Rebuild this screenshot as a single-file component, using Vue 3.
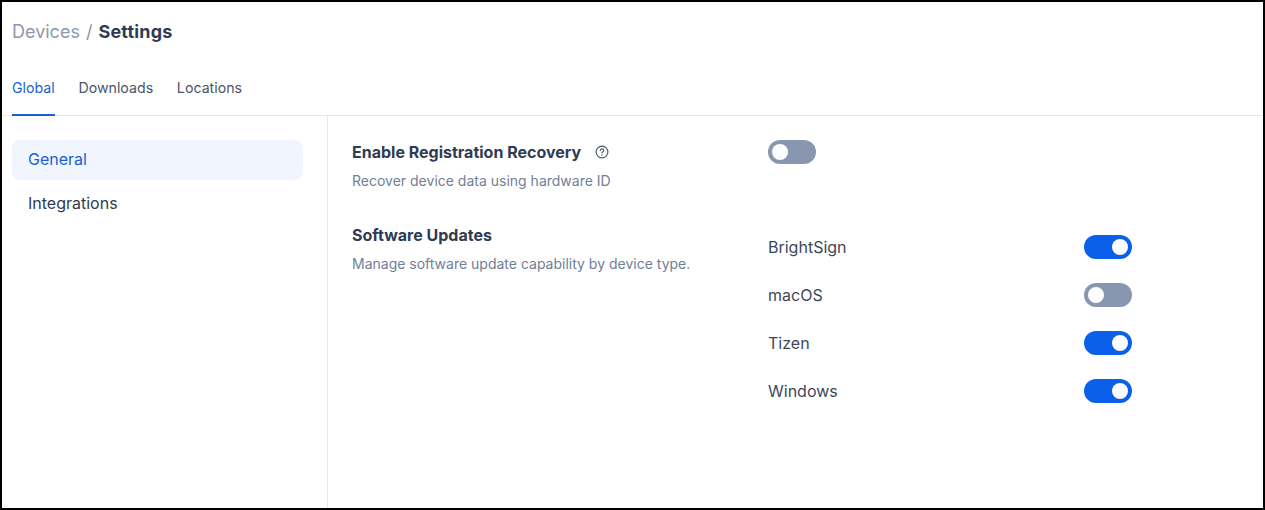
<template>
  <div class="page">
    <header class="header">
      <div class="breadcrumb">
        <span class="crumb">Devices</span>
        <span class="slash">/</span>
        <span class="current">Settings</span>
      </div>
      <nav class="tabs">
        <a
          v-for="tab in tabs"
          :key="tab"
          class="tab"
          :class="{ active: tab === 'Global' }">{{ tab }}</a>
      </nav>
    </header>

    <div class="body">
      <aside class="sidebar">
        <a
          v-for="item in sections"
          :key="item"
          class="side-item"
          :class="{ active: item === 'General' }">{{ item }}</a>
      </aside>

      <main class="content">
        <section class="setting recovery">
          <div class="setting-info">
            <div class="title-row">
              <h3 class="setting-title">Enable Registration Recovery</h3>
              <svg class="help" width="16" height="16" viewBox="0 0 16 16" fill="none">
                <circle cx="8" cy="8" r="5.9" stroke="#4a5568" stroke-width="1.1" />
                <path
                  d="M6.3 6.5c0-1 .8-1.6 1.7-1.6s1.7.6 1.7 1.5c0 1.3-1.7 1.3-1.7 2.6"
                  stroke="#4a5568"
                  stroke-width="1.1"
                  stroke-linecap="round" />
                <circle cx="8" cy="10.9" r=".65" fill="#4a5568" />
              </svg>
            </div>
            <p class="setting-desc">Recover device data using hardware ID</p>
          </div>
          <span class="toggle"><span class="knob"></span></span>
        </section>

        <section class="setting updates">
          <div class="setting-info">
            <h3 class="setting-title">Software Updates</h3>
            <p class="setting-desc">Manage software update capability by device type.</p>
          </div>
          <div class="device-list">
            <div v-for="device in devices" :key="device.name" class="device-row">
              <span class="device-name">{{ device.name }}</span>
              <span class="toggle" :class="{ on: device.on }"><span class="knob"></span></span>
            </div>
          </div>
        </section>
      </main>
    </div>
  </div>
</template>

<script setup>
const tabs = ['Global', 'Downloads', 'Locations'];
const sections = ['General', 'Integrations'];

const devices = [
  { name: 'BrightSign', on: true },
  { name: 'macOS', on: false },
  { name: 'Tizen', on: true },
  { name: 'Windows', on: true },
];
</script>

<style>
html,
body {
  margin: 0;
  background: #fff;
}
</style>

<style scoped>
.page {
  box-sizing: border-box;
  width: 1265px;
  height: 510px;
  border: 2px solid #000;
  display: flex;
  flex-direction: column;
  background: #fff;
  font-family: Inter, "Liberation Sans", sans-serif;
  overflow: hidden;
}

.header {
  padding: 0 10px;
  border-bottom: 1px solid #e2e8f0;
  flex-shrink: 0;
  height: 114px;
  box-sizing: border-box;
  display: flex;
  flex-direction: column;
}

.breadcrumb {
  display: flex;
  align-items: center;
  gap: 6px;
  height: 60px;
  font-size: 18px;
  line-height: 28px;
}

.crumb,
.slash {
  color: #8c98ac;
}

.current {
  font-weight: 700;
  letter-spacing: 0.2px;
  color: #2f3b52;
}

.tabs {
  display: flex;
  gap: 23.7px;
  margin-top: auto;
  margin-bottom: -1px;
  height: 53px;
}

.tab {
  box-sizing: border-box;
  height: 53px;
  padding-top: 15px;
  font-size: 14.2px;
  line-height: 20px;
  color: #4a5568;
}

.tab.active {
  color: #1a5fd0;
  border-bottom: 2px solid #1a5fd0;
}

.body {
  flex: 1;
  display: flex;
  min-height: 0;
}

.sidebar {
  box-sizing: border-box;
  width: 326px;
  flex-shrink: 0;
  padding: 24px 24px 0 10px;
  border-right: 1px solid #e2e8f0;
  display: flex;
  flex-direction: column;
  gap: 4px;
}

.side-item {
  box-sizing: border-box;
  height: 40px;
  padding: 0 16px 2px;
  display: flex;
  align-items: center;
  border-radius: 8px;
  font-size: 16px;
  color: #2f3b52;
}

.side-item.active {
  background: #f1f6fe;
  color: #1a5fd0;
}

.content {
  flex: 1;
  padding: 24px;
}

.setting {
  display: grid;
  grid-template-columns: 416px 364px;
}

.recovery {
  height: 83px;
}

.title-row {
  display: flex;
  align-items: center;
  gap: 13px;
}

.setting-title {
  margin: 0;
  font-size: 16px;
  line-height: 24px;
  font-weight: 700;
  color: #2f3b52;
}

.setting-desc {
  margin: 5px 0 0;
  font-size: 14px;
  line-height: 24px;
  color: #718096;
}

.toggle {
  box-sizing: border-box;
  display: flex;
  align-items: center;
  width: 48px;
  height: 24px;
  padding: 0 4px;
  border-radius: 12px;
  background: #8896b0;
}

.toggle.on {
  background: #0b5fe8;
  justify-content: flex-end;
}

.knob {
  width: 16px;
  height: 16px;
  border-radius: 50%;
  background: #fff;
}

.device-list {
  display: flex;
  flex-direction: column;
  gap: 24px;
  padding-top: 12px;
}

.device-row {
  display: flex;
  align-items: center;
  justify-content: space-between;
  height: 24px;
}

.device-name {
  font-size: 16px;
  color: #3c4858;
}
</style>
